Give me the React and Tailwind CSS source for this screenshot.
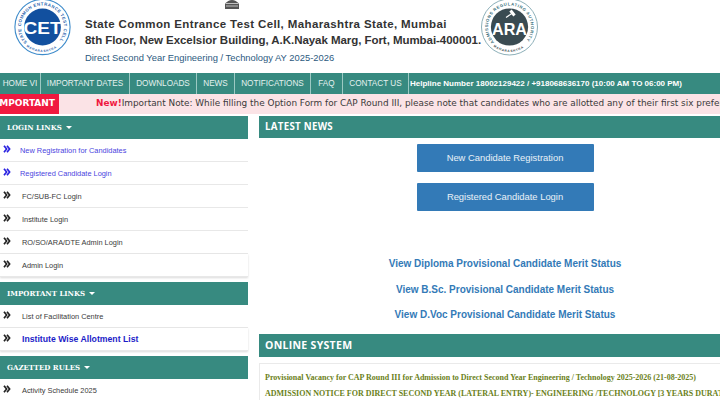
import React from "react";

const Chev = ({ c }) => (
  <svg width="8" height="8" viewBox="0 0 8 8" className="shrink-0">
    <path d="M1 0.8 L3.6 4 L1 7.2 M4 0.8 L6.6 4 L4 7.2" fill="none" stroke={c} strokeWidth="1.7" />
  </svg>
);

const Caret = () => <span className="ml-1 inline-block w-0 h-0 border-x-[3px] border-x-transparent border-t-[3.5px] border-t-white relative top-[-1px]" />;

const Row = ({ children, blue, bold, pad = "pl-[22px]", last }) => (
  <div className={`h-[23px] flex items-center border-b border-[#e8e8e8] relative ${last ? "shadow-[0_1px_2px_rgba(0,0,0,0.15)]" : ""}`}>
    <span className="absolute left-[3px] top-[6px]"><Chev c={blue ? "#2a22e0" : "#222"} /></span>
    <span className={`${pad} pt-[2px] ${bold ? "text-[8.7px] font-bold text-[#1c1cc8]" : blue ? "text-[7.4px] text-[#4a44e0]" : "text-[7.4px] text-[#3a3a3a]"}`}>{children}</span>
  </div>
);

const SideHead = ({ children }) => (
  <div className="h-[23px] bg-[#378a80] flex items-center pl-[7px] pt-[1px] text-white text-[7px] font-bold font-['DejaVu_Serif',serif]">
    {children}<Caret />
  </div>
);

const CetLogo = () => (
  <svg width="60" height="58" viewBox="0 0 60 58" className="absolute left-[13px] top-[-1px]">
    <defs>
      <path id="cetarc" d="M 14.3 43.2 A 21.5 21.5 0 1 1 44.7 43.2" />
      <path id="cetarc2" d="M 13.4 47.2 A 25 25 0 0 0 45.6 47.2" />
    </defs>
    <circle cx="29.5" cy="28" r="27.6" fill="#fff" stroke="#3f8ccb" strokeWidth="1.1" />
    <circle cx="29.5" cy="28" r="18.4" fill="#12509f" />
    <text fontFamily="Liberation Sans" fontSize="4.3" fontWeight="700" fill="#1f62ad"><textPath href="#cetarc" textLength="98">STATE COMMON ENTRANCE TEST CELL</textPath></text>
    <text fontFamily="Liberation Sans" fontSize="3.2" fontWeight="700" fill="#1f62ad"><textPath href="#cetarc2" textLength="32">MAHARASHTRA</textPath></text>
    <text x="29.5" y="35" textAnchor="middle" fontFamily="Liberation Sans" fontSize="17" fontWeight="700" fill="#fff" textLength="38" lengthAdjust="spacingAndGlyphs">CET</text>
  </svg>
);

const AraLogo = () => (
  <svg width="60" height="58" viewBox="0 0 60 58" className="absolute left-[480px] top-[-1px]">
    <defs>
      <path id="araarc" d="M 14.3 43.2 A 21.5 21.5 0 1 1 44.7 43.2" />
      <path id="araarc2" d="M 13.4 47.2 A 25 25 0 0 0 45.6 47.2" />
    </defs>
    <circle cx="29.5" cy="28" r="28" fill="#fff" stroke="#7fa6b0" strokeWidth="0.9" />
    <circle cx="29.5" cy="28" r="18.6" fill="#3a4b52" />
    <text fontFamily="Liberation Sans" fontSize="4.2" fontWeight="700" fill="#3b6f7b"><textPath href="#araarc" textLength="98">ADMISSIONS REGULATING AUTHORITY</textPath></text>
    <text fontFamily="Liberation Sans" fontSize="3.2" fontWeight="700" fill="#3a4b52"><textPath href="#araarc2" textLength="32">MAHARASHTRA</textPath></text>
    <path d="M26 18.5 L32.5 14" stroke="#fff" strokeWidth="1.2" fill="none" />
    <path d="M30.5 11.5 L34.5 16.5" stroke="#fff" strokeWidth="3" fill="none" />
    <text x="29.5" y="36" textAnchor="middle" fontFamily="Liberation Sans" fontSize="17" fontWeight="700" fill="#fff" textLength="35" lengthAdjust="spacingAndGlyphs">ARA</text>
  </svg>
);

const Emblem = () => (
  <svg width="16" height="10" viewBox="0 0 16 10" className="absolute left-[224px] top-0">
    <path d="M1 9 L15 9 L15 4 Q12 0 8 0 Q4 0 1 4 Z" fill="#555" />
    <path d="M2 3.5 L14 3.5 M2 6 L14 6" stroke="#ddd" strokeWidth="0.8" />
  </svg>
);

const NavItem = ({ children, w }) => (
  <div className={`${w} h-full flex items-center justify-center pt-[1px] border-r border-[#9cc9c3] shrink-0`}>{children}</div>
);

export default function App() {
  return (
    <div className="w-[720px] h-[400px] overflow-hidden bg-white font-['Liberation_Sans',Arial,sans-serif] relative">
      <header className="h-[73px] relative">
        <CetLogo />
        <Emblem />
        <AraLogo />
        <div className="pl-[85px] pt-[16px]">
          <div className="text-[11.5px] font-bold text-[#333] leading-[16px] tracking-[0.38px] whitespace-nowrap">State Common Entrance Test Cell, Maharashtra State, Mumbai</div>
          <div className="text-[11.5px] font-bold text-[#333] leading-[16px] tracking-[-0.05px] whitespace-nowrap">8th Floor, New Excelsior Building, A.K.Nayak Marg, Fort, Mumbai-400001.</div>
          <div className="text-[9.4px] text-[#2c5a80] leading-[17px] mt-[1px] whitespace-nowrap">Direct Second Year Engineering / Technology AY 2025-2026</div>
        </div>
      </header>

      <nav className="h-[21px] bg-[#378a80] flex items-center text-[8.2px] text-[#e4f1ef] whitespace-nowrap">
        <NavItem w="w-[41px]">HOME VI</NavItem>
        <NavItem w="w-[89px]">IMPORTANT DATES</NavItem>
        <NavItem w="w-[67px]">DOWNLOADS</NavItem>
        <NavItem w="w-[38px]">NEWS</NavItem>
        <NavItem w="w-[76px]">NOTIFICATIONS</NavItem>
        <NavItem w="w-[32px]">FAQ</NavItem>
        <NavItem w="w-[66px]">CONTACT US</NavItem>
        <span className="pl-[1px] text-[8px] font-bold text-white">Helpline Number 18002129422 / +918068636170 (10:00 AM TO 06:00 PM)</span>
      </nav>

      <div className="h-[20px] bg-[#fbe3e6] flex items-center whitespace-nowrap overflow-hidden font-['DejaVu_Sans',sans-serif]">
        <div className="w-[59px] h-full bg-[#f0193f] text-white text-[9px] font-bold flex items-center justify-end pr-[4px] overflow-hidden shrink-0">IMPORTANT</div>
        <span className="ml-[37px] text-[8.9px] text-[#3a3a3a]"><b className="text-[#f0193f]">New!</b>Important Note: While filling the Option Form for CAP Round III, please note that candidates who are allotted any of their first six preferences</span>
      </div>

      <div className="flex gap-[11px] pt-[2px]">
        <aside className="w-[248px] shrink-0">
          <SideHead>LOGIN LINKS</SideHead>
          <Row blue pad="pl-[20px]">New Registration for Candidates</Row>
          <Row blue pad="pl-[20px]">Registered Candidate Login</Row>
          <Row>FC/SUB-FC Login</Row>
          <Row>Institute Login</Row>
          <Row>RO/SO/ARA/DTE Admin Login</Row>
          <Row last>Admin Login</Row>
          <div className="h-[5px]" />
          <SideHead>IMPORTANT LINKS</SideHead>
          <Row>List of Facilitation Centre</Row>
          <Row bold last>Institute Wise Allotment List</Row>
          <div className="h-[5px]" />
          <SideHead>GAZETTED RULES</SideHead>
          <Row>Activity Schedule 2025</Row>
        </aside>

        <main className="flex-1 min-w-0">
          <div className="h-[22px] bg-[#378a80] flex items-center pl-[6px] pt-[1px] text-white text-[9.7px] font-bold tracking-[0.3px] font-['Open_Sans',sans-serif]">LATEST NEWS</div>
          <div className="flex flex-col items-center pt-[6px] gap-[11px] w-[492px]">
            <div className="w-[177px] h-[28px] bg-[#337ab7] rounded-[1px] text-white/90 text-[9.4px] flex items-center justify-center">New Candidate Registration</div>
            <div className="w-[177px] h-[28px] bg-[#337ab7] rounded-[1px] text-white/90 text-[9.4px] flex items-center justify-center">Registered Candidate Login</div>
          </div>
          <div className="flex flex-col items-center pt-[44px] gap-[7.5px] w-[492px] text-[#337ab7] text-[10px] font-bold leading-[18px]">
            <div>View Diploma Provisional Candidate Merit Status</div>
            <div>View B.Sc. Provisional Candidate Merit Status</div>
            <div>View D.Voc Provisional Candidate Merit Status</div>
          </div>
          <div className="mt-[10px] h-[23px] bg-[#378a80] flex items-center pl-[6px] text-white text-[10.5px] font-bold tracking-[0.3px] font-['Open_Sans',sans-serif]">ONLINE SYSTEM</div>
          <div className="mt-[6px] border-t border-l border-[#eaeaea] pl-[5px] pt-[6px] whitespace-nowrap font-['Liberation_Serif',serif] font-bold text-[#6b7f1a] text-[8px] leading-[15.5px]">
            <div>Provisional Vacancy for CAP Round III for Admission to Direct Second Year Engineering / Technology 2025-2026 (21-08-2025)</div>
            <div>ADMISSION NOTICE FOR DIRECT SECOND YEAR (LATERAL ENTRY)- ENGINEERING /TECHNOLOGY [3 YEARS DURATION]</div>
          </div>
        </main>
      </div>
    </div>
  );
}
